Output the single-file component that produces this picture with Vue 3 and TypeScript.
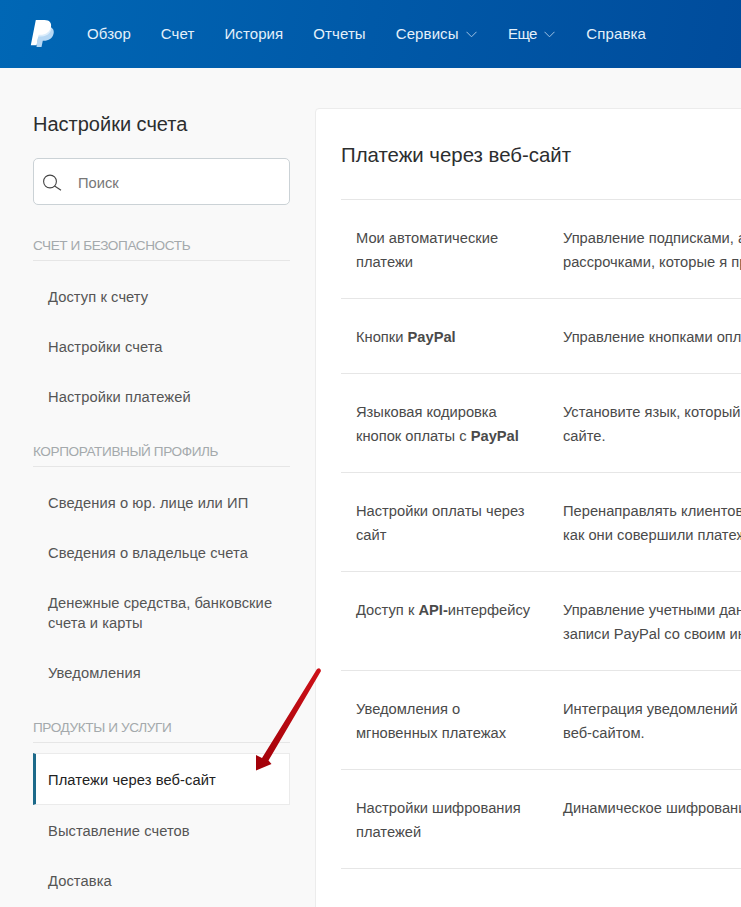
<script setup lang="ts">
const nav = [
  { label: 'Обзор', caret: false },
  { label: 'Счет', caret: false },
  { label: 'История', caret: false },
  { label: 'Отчеты', caret: false },
  { label: 'Сервисы', caret: true },
  { label: 'Еще', caret: true },
  { label: 'Справка', caret: false },
]
const groups = [
  { name: 'СЧЕТ И БЕЗОПАСНОСТЬ', items: ['Доступ к счету', 'Настройки счета', 'Настройки платежей'] },
  { name: 'КОРПОРАТИВНЫЙ ПРОФИЛЬ', items: ['Сведения о юр. лице или ИП', 'Сведения о владельце счета', 'Денежные средства, банковские счета и карты', 'Уведомления'] },
  { name: 'ПРОДУКТЫ И УСЛУГИ', items: ['Платежи через веб-сайт', 'Выставление счетов', 'Доставка'] },
]
const rows: { html: string; desc: string[] }[] = [
  { html: 'Мои автоматические<br>платежи', desc: ['Управление подписками, автоматическими платежами и', 'рассрочками, которые я предлагаю'] },
  { html: 'Кнопки <b>PayPal</b>', desc: ['Управление кнопками оплаты на вашем сайте'] },
  { html: 'Языковая кодировка<br>кнопок оплаты с <b>PayPal</b>', desc: ['Установите язык, который используется на вашем', 'сайте.'] },
  { html: 'Настройки оплаты через<br>сайт', desc: ['Перенаправлять клиентов на ваш сайт после того,', 'как они совершили платеж'] },
  { html: 'Доступ к <b>API-</b>интерфейсу', desc: ['Управление учетными данными для интеграции', 'записи PayPal со своим интернет-магазином'] },
  { html: 'Уведомления о<br>мгновенных платежах', desc: ['Интеграция уведомлений о платежах с вашим', 'веб-сайтом.'] },
  { html: 'Настройки шифрования<br>платежей', desc: ['Динамическое шифрование кнопок оплаты'] },
]
</script>

<template>
  <div class="page">
    <header class="top">
      <svg class="logo" width="24" height="28" viewBox="0 0 24 28">
        <path d="M9 6.5 H17 C21.5 6.5 24.5 9 23.6 13.5 C22.6 18.5 18.5 20.8 14 20.8 H12.8 L11.5 27 H6.5 Z" fill="#b7d8f4" />
        <path d="M8 14 H11 C15.5 14 19.8 11.5 21 7 C22 9 21 12 18 14.5 C15.5 16.3 12 16.5 9 16.5 H7.8 Z" fill="#dcedfb" />
        <path d="M5.8 0 H14.5 C19.5 0 21.8 2.8 21 7 C20 12 15.5 14.8 10.5 14.8 H8.6 L6.6 25.2 H0.8 Z" fill="#ffffff" />
      </svg>
      <nav class="nav">
        <span v-for="n in nav" :key="n.label" class="nav-item" :class="{ drop: n.caret }">
          {{ n.label }}
          <svg v-if="n.caret" class="caret" width="11" height="7" viewBox="0 0 11 7"><path d="M0.5 0.8 L5.5 5.8 L10.5 0.8" fill="none" stroke="#9fc3e4" stroke-width="1" /></svg>
        </span>
      </nav>
    </header>
    <div class="body">
      <aside class="side">
        <h2 class="side-title">Настройки счета</h2>
        <div class="search">
          <svg width="20" height="20" viewBox="0 0 20 20" class="search-ic"><circle cx="7" cy="9.5" r="6.4" fill="none" stroke="#444" stroke-width="1.1" /><path d="M11.6 14 L18 18.2" stroke="#444" stroke-width="1.1" /></svg>
          <span class="search-ph">Поиск</span>
        </div>
        <section v-for="g in groups" :key="g.name" class="group">
          <div class="group-name">{{ g.name }}</div>
          <ul class="list">
            <li v-for="i in g.items" :key="i" class="item" :class="{ active: i === 'Платежи через веб-сайт' }">{{ i }}</li>
          </ul>
        </section>
      </aside>
      <main class="card">
        <h1 class="card-title">Платежи через веб-сайт</h1>
        <div v-for="(r, idx) in rows" :key="idx" class="row">
          <div class="row-title" v-html="r.html"></div>
          <div class="row-desc"><div v-for="d in r.desc" :key="d">{{ d }}</div></div>
        </div>
      </main>
    </div>
    <svg class="arrow" width="80" height="115" viewBox="0 0 80 115">
      <defs><linearGradient id="ag" x1="1" y1="0" x2="0" y2="1"><stop offset="0" stop-color="#cf1219" /><stop offset="1" stop-color="#a00008" /></linearGradient></defs>
      <path d="M7 106.5 L7 91 L13 94 L68 5 Q71.5 3 72 7 L19.5 96.5 L22.5 100 Z" fill="url(#ag)" />
    </svg>
  </div>
</template>

<style>
html, body { margin: 0; background: #f9f9f9; overflow: hidden; }
</style>

<style scoped>
.page { position: relative; width: 741px; height: 907px; overflow: hidden; background: #f9f9f9; font-family: "Liberation Sans", Arial, sans-serif; color: #444; font-size: 14.7px; }
.top { height: 68px; display: flex; align-items: center; padding-left: 30px; background: linear-gradient(100deg, #0067b5 0%, #0059a8 50%, #004c9c 100%); }
.logo { margin-right: 33px; flex: none; }
.nav { display: flex; gap: 30px; color: #e4f0fa; font-size: 15px; letter-spacing: 0.1px; margin-top: -1px; }
.nav-item { display: flex; align-items: center; gap: 7px; white-space: nowrap; }
.nav-item.drop { margin-right: 1.5px; }
.nav-item:nth-child(6) { letter-spacing: -0.6px; }
.caret { margin-top: 1px; }
.body { display: flex; align-items: flex-start; padding: 40px 0 0 33px; gap: 25px; }
.side { width: 257px; flex: none; }
.side-title { margin: 0; font-size: 20px; line-height: 32px; font-weight: 400; color: #2c2e2f; }
.search { margin-top: 18px; height: 45px; border: 1px solid #cbd2d6; border-radius: 5px; background: #fff; display: flex; align-items: center; margin-bottom: 32px; }
.search-ic { margin-left: 9px; margin-top: 1px; flex: none; }
.search-ph { margin-left: 15px; margin-top: 2px; color: #777; }
.group { margin-top: 21px; }
.search + .group { margin-top: 0; }
.group-name { height: 23px; line-height: 18px; font-size: 13.6px; color: #a4a9ac; border-bottom: 1px solid #e6e6e6; letter-spacing: -0.4px; }
.list { list-style: none; margin: 11px 0 0; padding: 0; }
.item { padding: 15px; line-height: 20px; color: #555; letter-spacing: 0.08px; }
.item.active { margin: -1px 0 1px; border: 1px solid #ebebeb; border-left: 3px solid #1d6a8a; padding: 16px 14px 14px 12px; background: #fff; color: #222; letter-spacing: 0.1px; }
.card { flex: none; width: 800px; height: 900px; box-sizing: border-box; background: #fff; border: 1px solid #ececec; border-radius: 4px; padding: 0 25px; }
.card-title { margin: 0; height: 90px; border-bottom: 1px solid #e6e6e6; font-size: 20.4px; font-weight: 400; line-height: 92px; color: #2c2e2f; }
.row { display: flex; padding: 26px 15px 24px; line-height: 24px; border-bottom: 1px solid #e6e6e6; color: #4a4a4a; }
.row-title { width: 207px; flex: none; }
.row-desc { white-space: nowrap; }
.arrow { position: absolute; left: 249px; top: 664px; pointer-events: none; }
</style>
